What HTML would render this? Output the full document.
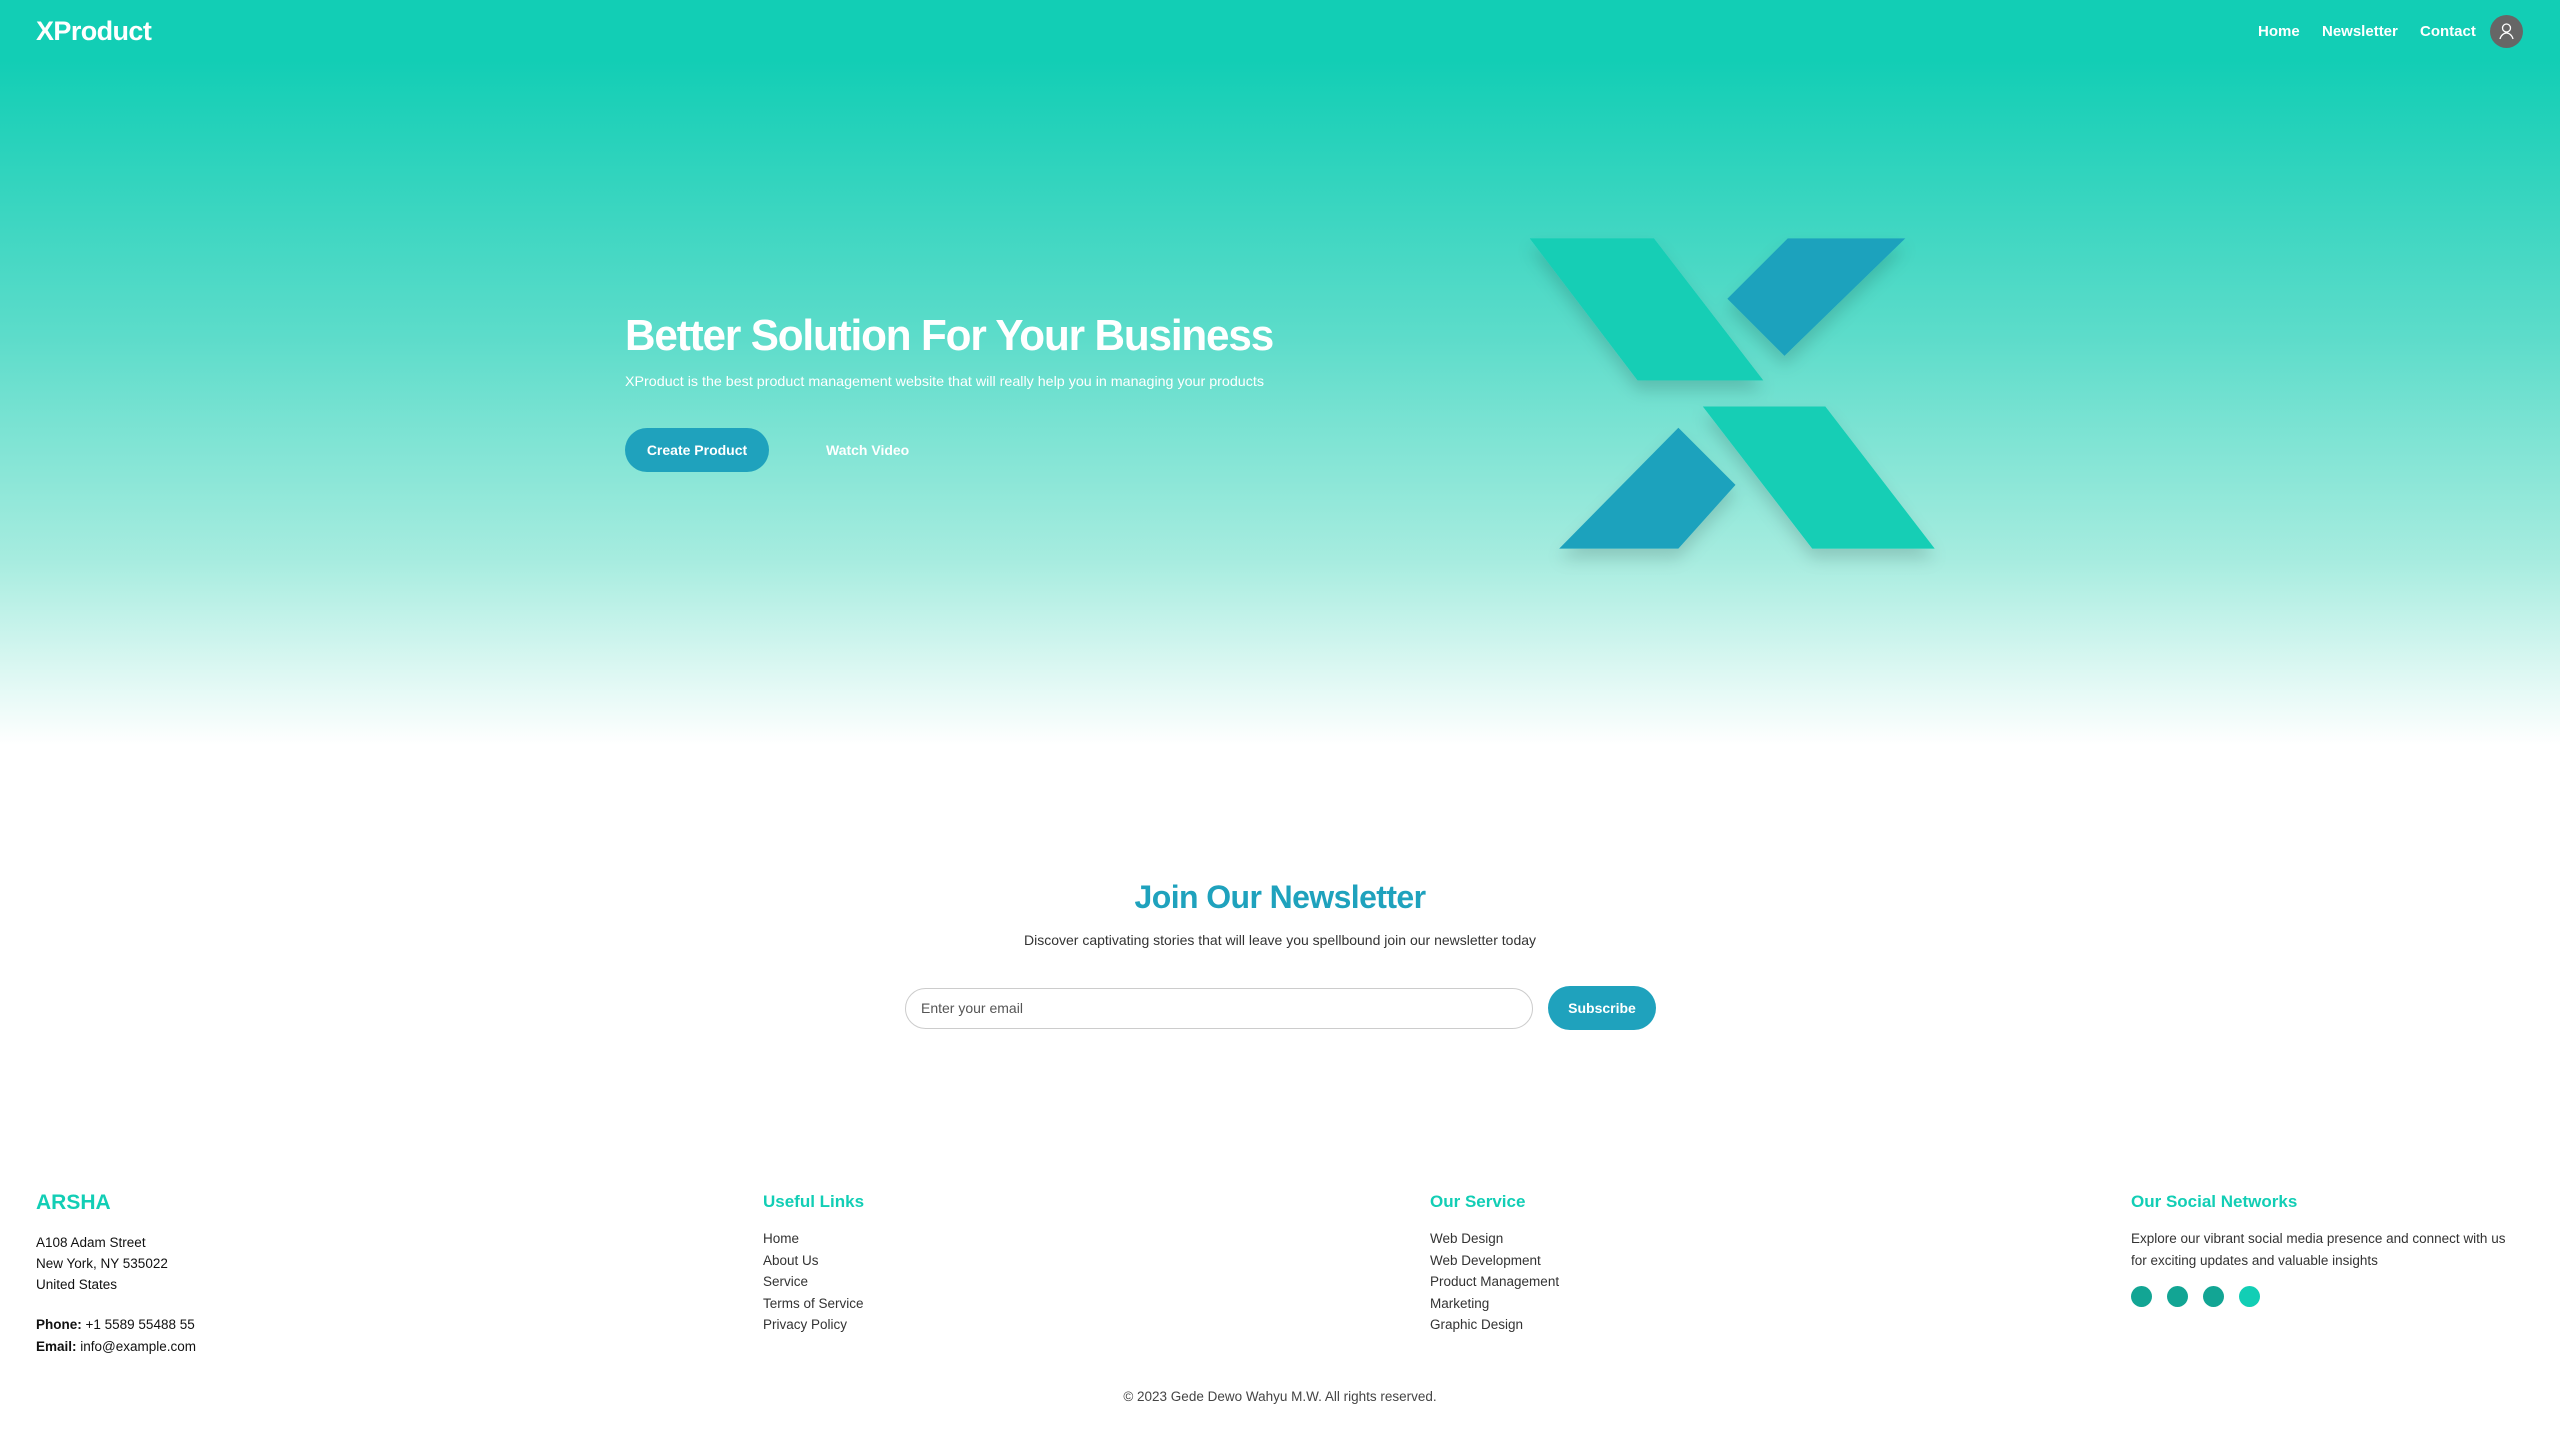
<!DOCTYPE html>
<html><head><meta charset="utf-8">
<style>
*{margin:0;padding:0;box-sizing:border-box}
body{width:2560px;height:1440px;position:relative;overflow:hidden;background:#fff;font-family:"Liberation Sans",sans-serif;color:#222}
.hero{position:absolute;left:0;top:0;width:2560px;height:745px;background:linear-gradient(180deg,#12ceb5 0%,#12ceb5 8%,#5cdcca 45%,#a6ecdf 75%,#fff 100%)}
.a{position:absolute;white-space:nowrap}
.nav{color:#fff;font-weight:bold;font-size:15px;top:23px}
.fh{font-weight:bold;color:#12ceb5;font-size:17px}
.ft{font-size:13.5px;color:#333}
</style></head><body>
<div class="hero"></div>
<div class="a" style="left:36px;top:16px;font-size:27px;font-weight:bold;color:#fff;letter-spacing:-0.6px">XProduct</div>
<div class="a nav" style="left:2258px">Home</div>
<div class="a nav" style="left:2322px">Newsletter</div>
<div class="a nav" style="left:2420px">Contact</div>
<div class="a" style="left:2490px;top:15px;width:33px;height:33px;border-radius:50%;background:#666">
<svg width="33" height="33" viewBox="0 0 33 33"><circle cx="16.5" cy="13" r="4" fill="none" stroke="#fff" stroke-width="1.3"/><path d="M10 24c1-4 4-6 6.5-6s5.5 2 6.5 6" fill="none" stroke="#fff" stroke-width="1.3"/></svg></div>

<div class="a" style="left:625px;top:311px;font-size:44px;font-weight:bold;color:#fff;letter-spacing:-1.2px;transform:scaleX(0.96);transform-origin:left">Better Solution For Your Business</div>
<div class="a" style="left:625px;top:373px;font-size:14px;color:#fff;transform:scaleX(1.02);transform-origin:left">XProduct is the best product management website that will really help you in managing your products</div>
<div class="a" style="left:625px;top:428px;width:144px;height:44px;border-radius:22px;background:#1fa2bd;color:#fff;font-weight:bold;font-size:14px;line-height:44px;text-align:center">Create Product</div>
<div class="a" style="left:826px;top:442px;color:#fff;font-weight:bold;font-size:14px">Watch Video</div>

<svg class="a" style="left:0;top:0" width="2560" height="1440" viewBox="0 0 1568 882">
<defs><filter id="s" x="-20%" y="-20%" width="140%" height="160%"><feDropShadow dx="0" dy="6" stdDeviation="5" flood-color="#000" flood-opacity="0.15"/></filter></defs>
<g filter="url(#s)">
<polygon points="937,146 1013,146 1080,233 1003,233" fill="#12ceb5"/>
<polygon points="1095,146 1167,146 1093,218 1058,183" fill="#1fa2bd"/>
<polygon points="1028,262 1063,297 1028,336 955,336" fill="#1fa2bd"/>
<polygon points="1043,249 1118,249 1185,336 1110,336" fill="#12ceb5"/>
</g></svg>

<div class="a" style="left:0;width:2560px;text-align:center;top:879px;font-size:32px;font-weight:bold;color:#1fa2bd;letter-spacing:-0.6px">Join Our Newsletter</div>
<div class="a" style="left:0;width:2560px;text-align:center;top:932px;font-size:14px;color:#333">Discover captivating stories that will leave you spellbound join our newsletter today</div>
<div class="a" style="left:905px;top:988px;width:628px;height:41px;border:1px solid #ccc;border-radius:21px;padding-left:15px;line-height:39px;font-size:14px;color:#555">Enter your email</div>
<div class="a" style="left:1548px;top:986px;width:108px;height:44px;border-radius:22px;background:#1fa2bd;color:#fff;font-weight:bold;font-size:14px;line-height:44px;text-align:center">Subscribe</div>

<div class="a" style="left:36px;top:1191px;font-size:21px;font-weight:bold;color:#12ceb5">ARSHA</div>
<div class="a ft" style="left:36px;top:1232px;line-height:21px;color:#111">A108 Adam Street<br>New York, NY 535022<br>United States</div>
<div class="a ft" style="left:36px;top:1314px;line-height:22px;color:#111"><b>Phone:</b> +1 5589 55488 55<br><b>Email:</b> info@example.com</div>

<div class="a fh" style="left:763px;top:1192px">Useful Links</div>
<div class="a ft" style="left:763px;top:1228px;line-height:21.5px">Home<br>About Us<br>Service<br>Terms of Service<br>Privacy Policy</div>
<div class="a fh" style="left:1430px;top:1192px">Our Service</div>
<div class="a ft" style="left:1430px;top:1228px;line-height:21.5px">Web Design<br>Web Development<br>Product Management<br>Marketing<br>Graphic Design</div>
<div class="a fh" style="left:2131px;top:1192px">Our Social Networks</div>
<div class="a ft" style="left:2131px;top:1228px;line-height:21.5px">Explore our vibrant social media presence and connect with us<br>for exciting updates and valuable insights</div>
<div class="a" style="left:2131px;top:1286px;width:21px;height:21px;border-radius:50%;background:#12a594"></div>
<div class="a" style="left:2167px;top:1286px;width:21px;height:21px;border-radius:50%;background:#12a594"></div>
<div class="a" style="left:2203px;top:1286px;width:21px;height:21px;border-radius:50%;background:#12a594"></div>
<div class="a" style="left:2239px;top:1286px;width:21px;height:21px;border-radius:50%;background:#12ceb5"></div>

<div class="a ft" style="left:0;width:2560px;text-align:center;top:1389px;color:#444">© 2023 Gede Dewo Wahyu M.W. All rights reserved.</div>
</body></html>
